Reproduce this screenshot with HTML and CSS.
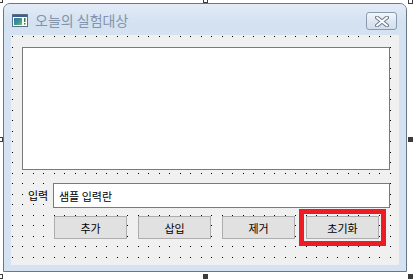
FILE: index.html
```html
<!DOCTYPE html>
<html>
<head>
    <title>오늘의 실험대상</title>
    <link rel="stylesheet" href="styles.css">
</head>
<body>
    <div class="screen">
        <div class="window">
            <div class="titlebar">
                <svg class="app-icon" width="16" height="13" viewBox="0 0 16 13">
                    <defs>
                        <linearGradient id="ig" x1="0" y1="0" x2="1" y2="1">
                            <stop offset="0" stop-color="#2e6fb5"/>
                            <stop offset="0.6" stop-color="#3f9a8a"/>
                            <stop offset="1" stop-color="#7cc35a"/>
                        </linearGradient>
                    </defs>
                    <rect x="0.5" y="0.5" width="15" height="12" fill="#ffffff" stroke="#5a6e88"/>
                    <rect x="1" y="1" width="14" height="2" fill="#3b5f8e"/>
                    <rect x="2" y="4" width="8" height="7" fill="url(#ig)"/>
                    <rect x="12" y="4" width="1.5" height="4" fill="#3a7a3a"/>
                    <rect x="12" y="9" width="1.5" height="1.5" fill="#3a7a3a"/>
                </svg>
                <span class="title">오늘의 실험대상</span>
                <div class="close-btn">
                    <svg width="14" height="11" viewBox="0 0 14 11">
                        <path d="M2 1.5 L12 9.5 M12 1.5 L2 9.5" stroke="#6f7c8e" stroke-width="4" stroke-linecap="round"/>
                        <path d="M2 1.5 L12 9.5 M12 1.5 L2 9.5" stroke="#ffffff" stroke-width="2" stroke-linecap="round"/>
                    </svg>
                </div>
            </div>
            <div class="client">
                <svg class="grid" width="388" height="230">
                    <defs>
                        <pattern id="dots" width="21" height="21" patternUnits="userSpaceOnUse">
                            <rect x="1" y="1" width="1" height="1" fill="#000"/>
                            <rect x="11" y="1" width="1" height="1" fill="#000"/>
                            <rect x="1" y="12" width="1" height="1" fill="#000"/>
                            <rect x="11" y="12" width="1" height="1" fill="#000"/>
                        </pattern>
                    </defs>
                    <rect width="388" height="230" fill="url(#dots)"/>
                </svg>

                <div class="listbox"></div>

                <div class="input-row">
                    <label class="field-label">입력</label>
                    <div class="textbox">샘플 입력란</div>
                </div>

                <div class="button-row">
                    <button class="btn">추가</button>
                    <button class="btn">삽입</button>
                    <button class="btn">제거</button>
                    <button class="btn marked">초기화</button>
                </div>
            </div>
        </div>

        <span class="handle h-tl"></span>
        <span class="handle h-tm"></span>
        <span class="handle h-tr"></span>
        <span class="handle h-ml"></span>
        <span class="handle h-mr filled"></span>
        <span class="handle h-bl"></span>
        <span class="handle h-bm filled"></span>
        <span class="handle h-br filled"></span>
    </div>
</body>
</html>
```

FILE: styles.css
```css
html, body {
    margin: 0;
    padding: 0;
    background: #ffffff;
}

body {
    font-family: "Noto Sans CJK KR", "Noto Sans", sans-serif;
    font-size: 11px;
}

.screen {
    position: relative;
    width: 413px;
    height: 280px;
    padding: 3px;
    box-sizing: border-box;
    overflow: hidden;
}

.window {
    width: 404px;
    height: 269px;
    box-sizing: border-box;
    border: 1px solid #6b7685;
    border-radius: 7px 7px 0 0;
    background: #d5e2f1;
    display: flex;
    flex-direction: column;
    padding: 0 7px 6px 7px;
}

.titlebar {
    height: 31px;
    flex: none;
    display: flex;
    align-items: center;
    margin: 0 -7px;
    padding: 0 9px 0 8px;
    border-radius: 6px 6px 0 0;
    background: linear-gradient(#e3ecf7, #d3e1f1 60%, #d5e2f1);
}

.app-icon {
    margin-top: 1px;
}

.title {
    margin-left: 7px;
    font-size: 14px;
    color: #8393a8;
    line-height: 1;
    margin-top: 1px;
}

.close-btn {
    margin-left: auto;
    width: 31px;
    height: 18px;
    box-sizing: border-box;
    border: 1px solid #8a9ab1;
    border-radius: 3px;
    background: linear-gradient(#f2f6fa, #dfe8f2 50%, #d2deec);
    display: flex;
    align-items: center;
    justify-content: center;
    margin-top: 3px;
}

.client {
    position: relative;
    flex: 1;
    background: #f0f0f0;
    padding: 12px 0 0 11px;
}

.grid {
    position: absolute;
    left: 0;
    top: 0;
}

.listbox {
    position: relative;
    width: 368px;
    height: 123px;
    box-sizing: border-box;
    background: #ffffff;
    border: 1px solid #7a7a7a;
}

.input-row {
    position: relative;
    display: flex;
    align-items: center;
    margin-top: 13px;
    padding-left: 6px;
}

.field-label {
    width: 25px;
    color: #000;
    line-height: 1;
}

.textbox {
    width: 337px;
    height: 25px;
    box-sizing: border-box;
    background: #ffffff;
    border: 1px solid #7a7a7a;
    padding: 0 5px;
    display: flex;
    align-items: center;
    color: #000;
}

.button-row {
    position: relative;
    display: flex;
    gap: 11px;
    margin-top: 8px;
    padding-left: 32px;
}

.btn {
    width: 73px;
    height: 23px;
    box-sizing: border-box;
    background: #e1e1e1;
    border: 1px solid #adadad;
    font-family: inherit;
    font-size: 11px;
    color: #000;
    padding: 0;
}

.marked {
    outline: 5px solid #ed1c24;
    outline-offset: 2px;
}

.handle {
    position: absolute;
    width: 5px;
    height: 5px;
    box-sizing: border-box;
    border: 1px solid #3c3c3c;
    background: #ffffff;
}

.handle.filled {
    background: #3c3c3c;
}

.h-tl { left: -2px; top: -2px; }
.h-tm { left: 203px; top: -2px; }
.h-tr { left: 408px; top: -1px; }
.h-ml { left: -2px; top: 137px; }
.h-mr { left: 408px; top: 137px; }
.h-bl { left: -2px; top: 274px; }
.h-bm { left: 203px; top: 274px; }
.h-br { left: 408px; top: 274px; }
```
